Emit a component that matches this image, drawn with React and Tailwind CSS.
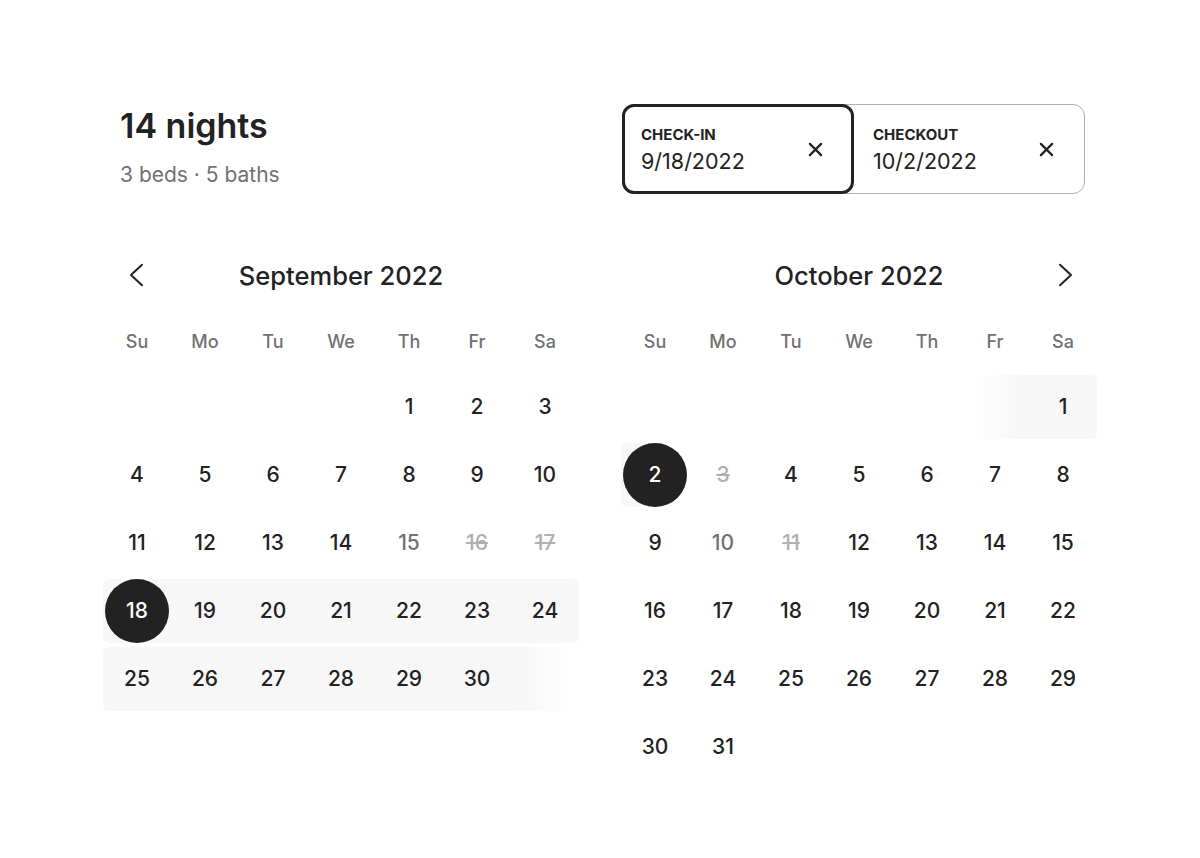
const FONT = { fontFamily: "Inter, 'Noto Sans', sans-serif" };

const WEEKDAYS = ["Su", "Mo", "Tu", "We", "Th", "Fr", "Sa"];

// cell: { day, status, band }
// status: normal | muted | struck | selected
// band: none | mid | start | end | fadeOut | fadeIn | halfLeft
function buildMonth(offset, days, overrides) {
  const cells = [];
  for (let i = 0; i < offset; i++) cells.push({ day: null, status: "normal", band: "none" });
  for (let d = 1; d <= days; d++) cells.push({ day: d, status: "normal", band: "none", ...(overrides[d] || {}) });
  while (cells.length % 7 !== 0) cells.push({ day: null, status: "normal", band: "none" });
  return cells;
}

const septOverrides = {
  15: { status: "muted" },
  16: { status: "struck" },
  17: { status: "struck" },
  18: { status: "selected", band: "start" },
  24: { band: "end" },
  25: { band: "start" },
};
for (let d = 19; d <= 30; d++) if (!septOverrides[d]) septOverrides[d] = { band: "mid" };
const september = buildMonth(4, 30, septOverrides);
september[34] = { day: null, status: "normal", band: "fadeOut" };

const october = buildMonth(6, 31, {
  1: { band: "end" },
  2: { status: "selected", band: "halfLeft" },
  3: { status: "struck" },
  10: { status: "muted" },
  11: { status: "struck" },
});
october[5] = { day: null, status: "normal", band: "fadeIn" };

const bandClass = {
  none: "",
  mid: "bg-[#f7f7f7]",
  start: "bg-[#f7f7f7] rounded-l-[6px]",
  end: "bg-[#f7f7f7] rounded-r-[6px]",
  fadeOut: "bg-linear-to-r from-[#f7f7f7] from-[18%] to-transparent to-[88%]",
  fadeIn: "bg-linear-to-r from-transparent from-[20%] to-[#f7f7f7] to-[88%]",
  halfLeft: "bg-linear-to-r from-[#f7f7f7] from-50% to-transparent to-50% rounded-l-[6px]",
};

const statusClass = {
  normal: "text-[#222222]",
  muted: "text-[#717171]",
  struck: "text-[#b0b0b0] line-through",
  selected: "text-white",
};

function DayCell({ cell }) {
  return (
    <div className="h-[68px] py-[2px]">
      <div className={`h-[64px] flex items-center justify-center ${bandClass[cell.band]}`}>
        {cell.day !== null &&
          (cell.status === "selected" ? (
            <div className="w-[64px] h-[64px] rounded-full bg-[#222222] flex items-center justify-center text-white text-[21px] font-medium">
              {cell.day}
            </div>
          ) : (
            <span className={`text-[21px] font-medium ${statusClass[cell.status]}`}>{cell.day}</span>
          ))}
      </div>
    </div>
  );
}

function Chevron({ dir }) {
  return (
    <svg width="24" height="24" viewBox="0 0 24 24" fill="none" stroke="#222222" strokeWidth="2" strokeLinecap="round" strokeLinejoin="round">
      {dir === "left" ? <path d="M17 1.8 L6 12 L17 22.2" /> : <path d="M7 1.8 L18 12 L7 22.2" />}
    </svg>
  );
}

function CloseIcon() {
  return (
    <svg width="15" height="15" viewBox="0 0 16 16" fill="none" stroke="#222222" strokeWidth="2.4" strokeLinecap="round">
      <path d="M2 2 L14 14 M14 2 L2 14" />
    </svg>
  );
}

function Month({ title, cells, prev, next }) {
  return (
    <div className="w-[476px]">
      <div className="grid grid-cols-[68px_1fr_68px] h-[68px] items-center">
        <div className="flex justify-center">{prev && <Chevron dir="left" />}</div>
        <h2 className="text-center text-[25.5px] font-medium text-[#222222] pt-[3px]">{title}</h2>
        <div className="flex justify-center pl-[4px]">{next && <Chevron dir="right" />}</div>
      </div>
      <div className="grid grid-cols-7 h-[64px] items-center">
        {WEEKDAYS.map((w) => (
          <div key={w} className="text-center text-[18px] font-medium text-[#717171]">
            {w}
          </div>
        ))}
      </div>
      <div className="grid grid-cols-7">
        {cells.map((c, i) => (
          <DayCell key={i} cell={c} />
        ))}
      </div>
    </div>
  );
}

export default function App() {
  return (
    <div className="w-[1200px] h-[858px] bg-white" style={FONT}>
      <div className="w-[994px] ml-[103px] pt-[104px]">
        <div className="flex justify-between items-start pl-[17px] pr-[12px]">
          <div className="pt-[2px]">
            <h1 className="text-[34px] font-semibold text-[#222222] leading-[40px]">14 nights</h1>
            <p className="text-[21px] text-[#717171] mt-[13px]">3 beds · 5 baths</p>
          </div>
          <div className="flex w-[463px] h-[90px] rounded-[12px] border border-[#b0b0b0]">
            <div className="w-[232px] -m-px h-[90px] rounded-[12px] border-[3px] border-[#222222] flex items-center justify-between pl-[16px] pr-[28px]">
              <div className="pt-[3px]">
                <div className="text-[15px] font-bold text-[#222222] leading-[20px]">CHECK-IN</div>
                <div className="text-[21.5px] text-[#222222] leading-[32px]">9/18/2022</div>
              </div>
              <CloseIcon />
            </div>
            <div className="flex-1 flex items-center justify-between pl-[20px] pr-[30px]">
              <div className="pt-[3px]">
                <div className="text-[15px] font-bold text-[#222222] leading-[20px]">CHECKOUT</div>
                <div className="text-[21.5px] text-[#222222] leading-[32px]">10/2/2022</div>
              </div>
              <CloseIcon />
            </div>
          </div>
        </div>
        <div className="flex gap-[42px] mt-[47px]">
          <Month title="September 2022" cells={september} prev />
          <Month title="October 2022" cells={october} next />
        </div>
      </div>
    </div>
  );
}
